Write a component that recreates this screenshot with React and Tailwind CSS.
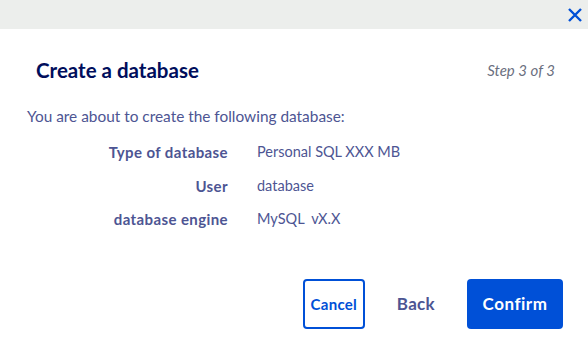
import { Fragment } from "react";

export default function App() {
  const rows = [
    ["Type of database", "Personal SQL XXX MB"],
    ["User", "database"],
    ["database engine", "MySQL\u00a0 vX.X"],
  ];
  return (
    <div className="w-[588px] h-[338px] bg-white overflow-hidden" style={{ fontFamily: "Lato, 'Noto Sans', sans-serif" }}>
      <div className="h-[29px] bg-[#eceeec] flex items-center justify-end pr-[6px]">
        <svg width="14" height="14" viewBox="0 0 14 14">
          <path d="M1 1L13 13M13 1L1 13" stroke="#0050d7" strokeWidth="2.4" fill="none" />
        </svg>
      </div>
      <div className="flex items-center justify-between pl-[36px] pr-[33px] mt-[28px]">
        <h1 className="text-[20.5px] font-bold text-[#000e5c] leading-[26px]">Create a database</h1>
        <span className="text-[15px] italic text-[#6b6f80] leading-[26px]">Step 3 of 3</span>
      </div>
      <p className="pl-[27px] mt-[23px] text-[15.4px] text-[#4d5593] leading-[20px]">You are about to create the following database:</p>
      <div className="mt-[16px] grid grid-cols-[228px_1fr] gap-x-[29px] gap-y-[13.5px] text-[14.5px] leading-[20px] text-[#4d5593]">
        {rows.map(([k, v]) => (
          <Fragment key={k}>
            <div className="text-right font-bold text-[15px] tracking-[0.4px]">{k}</div>
            <div>{v}</div>
          </Fragment>
        ))}
      </div>
      <div className="flex justify-end items-center mt-[50px] pr-[25px]">
        <button className="w-[62px] h-[50px] border-2 border-[#0050d7] rounded-[4px] text-[#0050d7] font-bold text-[15px] tracking-[0.3px]">Cancel</button>
        <button className="ml-[32px] text-[#4d5593] font-bold text-[17px] tracking-[0.3px]">Back</button>
        <button className="ml-[32px] w-[96px] h-[50px] bg-[#0050d7] rounded-[4px] text-white font-bold text-[17px] tracking-[0.5px]">Confirm</button>
      </div>
    </div>
  );
}
